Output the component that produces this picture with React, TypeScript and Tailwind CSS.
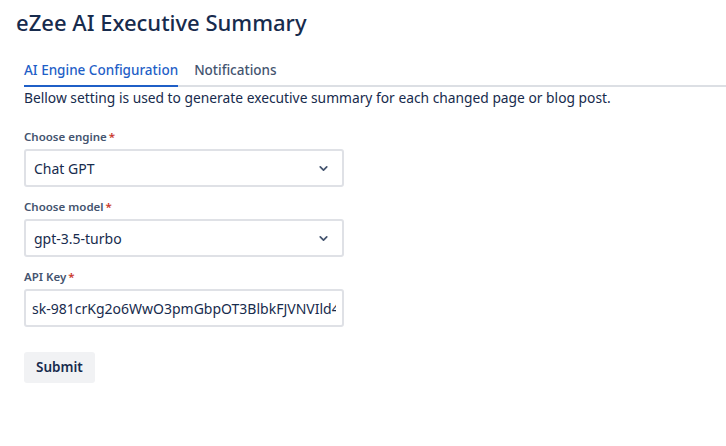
import { ChevronDown } from "lucide-react";

const font = { fontFamily: '"Noto Sans", "Open Sans", sans-serif' };

const Label = ({ text }: { text: string }) => (
  <label className="block text-[11.5px] font-semibold leading-4 text-[#44546F] mb-[4px]">
    {text}
    <span className="text-[#C9372C] ml-[2px]">*</span>
  </label>
);

const SelectBox = ({ value }: { value: string }) => (
  <div className="flex items-center justify-between w-[320px] h-[38px] border-2 border-[#DFE1E6] rounded-[3px] pl-[8px] pr-[12px] bg-white">
    <span className="text-[14px] text-[#172B4D]">{value}</span>
    <ChevronDown size={13} strokeWidth={3.2} className="text-[#44546F]" />
  </div>
);

export default function App() {
  return (
    <div className="min-h-screen bg-white pt-[5px] pl-4 overflow-hidden" style={font}>
      <h1 className="text-[22px] leading-[34px] font-medium text-[#172B4D]">
        eZee AI Executive Summary
      </h1>
      <div className="pl-2 mt-[21px]">
        <div className="flex gap-4 border-b-2 border-[#DCDFE4] w-[720px]">
          <div className="text-[13.5px] font-medium text-[#1F5FC7] leading-5 pb-[5px] border-b-2 border-[#1F5FC7] -mb-[2px]">
            AI Engine Configuration
          </div>
          <div className="text-[13.5px] font-medium text-[#44546F] leading-5 pb-[5px]">
            Notifications
          </div>
        </div>
        <p className="text-[13.8px] leading-5 text-[#172B4D] mt-[1px]">
          Bellow setting is used to generate executive summary for each changed page or blog post.
        </p>
        <form className="mt-[21px] flex flex-col">
          <Label text="Choose engine" />
          <SelectBox value="Chat GPT" />
          <div className="mt-[12px]">
            <Label text="Choose model" />
            <SelectBox value="gpt-3.5-turbo" />
          </div>
          <div className="mt-[12px]">
            <Label text="API Key" />
            <input
              readOnly
              value="sk-981crKg2o6WwO3pmGbpOT3BlbkFJVNVIld4gc"
              className="block w-[320px] h-[38px] border-2 border-[#DFE1E6] rounded-[3px] px-[6px] text-[14px] text-[#172B4D] outline-none"
            />
          </div>
          <div className="mt-[25px]">
            <button
              type="button"
              className="h-[31px] px-3 rounded-[3px] bg-[#F1F2F4] text-[13.5px] font-semibold text-[#172B4D]"
            >
              Submit
            </button>
          </div>
        </form>
      </div>
    </div>
  );
}
